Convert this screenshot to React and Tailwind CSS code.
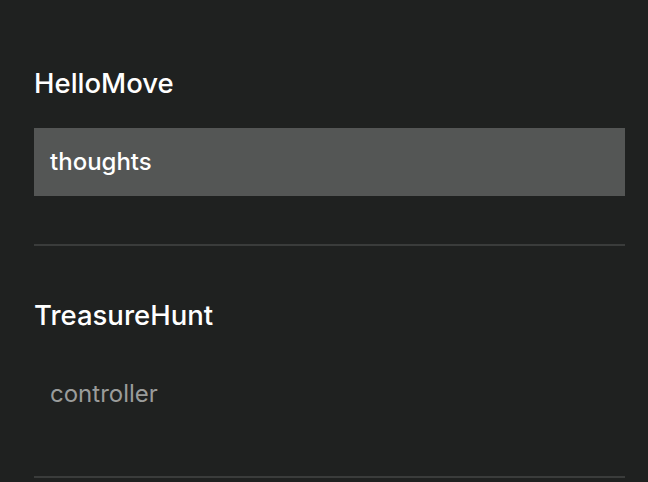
export default function App() {
  const sections = [
    { title: "HelloMove", items: [{ name: "thoughts", active: true }] },
    { title: "TreasureHunt", items: [{ name: "controller", active: false }] },
  ];
  return (
    <div className="w-[648px] h-[482px] overflow-hidden bg-[#1f2120] pt-[14px] pl-[34px] pr-[23px]" style={{ fontFamily: "Inter, 'Noto Sans', sans-serif" }}>
      {sections.map((s) => (
        <div key={s.title} className="h-[232px] border-b-2 border-[#3a3c3b] pt-[53px]">
          <h2 className="text-[27.5px] leading-[32px] font-medium text-white">{s.title}</h2>
          <ul className="mt-[29px]">
            {s.items.map((it) => (
              <li
                key={it.name}
                className={
                  it.active
                    ? "h-[68px] flex items-center px-4 bg-[#545655] text-white text-[24px] font-medium"
                    : "h-[68px] flex items-center px-4 text-[#9a9c9b] text-[24px]"
                }
              >
                {it.name}
              </li>
            ))}
          </ul>
        </div>
      ))}
    </div>
  );
}
